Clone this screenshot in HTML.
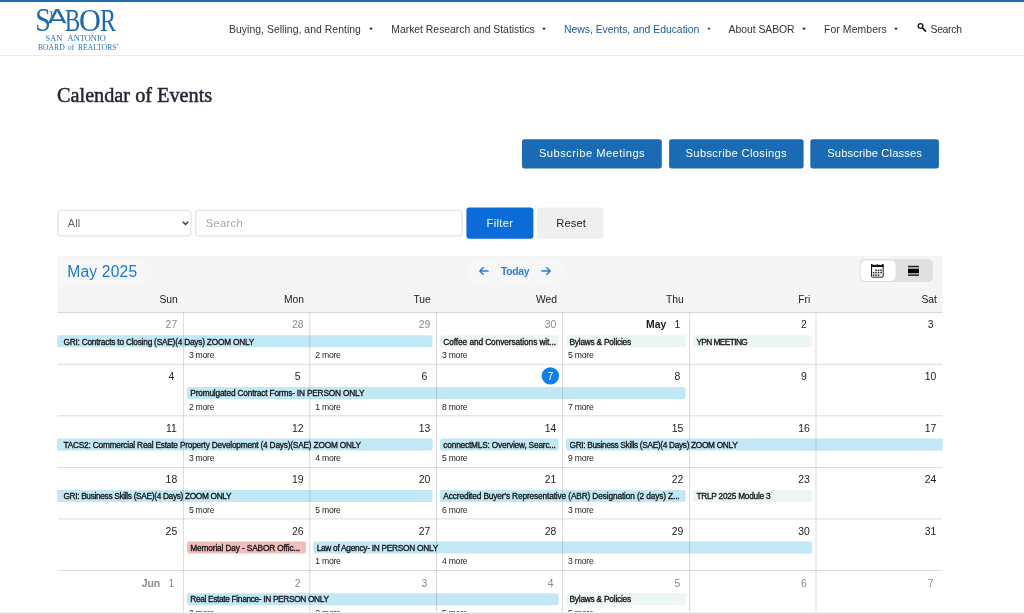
<!DOCTYPE html>
<html lang="en"><head><meta charset="utf-8"><title>Calendar of Events</title>
<style>
*{box-sizing:border-box;margin:0;padding:0}
html,body{width:1024px;height:614px;overflow:hidden;background:#fff}
body{font-family:"Liberation Sans",sans-serif;color:#222;position:relative}
.abs{position:absolute}
#topbar{position:absolute;left:0;top:0;width:1024px;height:2px;background:#1f6ab0}
#hdrline{position:absolute;left:0;top:55px;width:1024px;height:1px;background:#ececec}
.nav{position:absolute;top:22.6px;height:13px;line-height:13px;font-size:10.4px;color:#333;white-space:nowrap}
.nav.act{color:#1c5a97}
.dot{position:absolute;top:27.1px;width:3.2px;height:3.2px;border-radius:50%;background:#222}
.dot.act{background:#1c5a97}
#title{position:absolute;left:57px;top:83px;font-family:"Liberation Serif",serif;font-weight:normal;-webkit-text-stroke:0.5px #1e2430;font-size:20.5px;line-height:24px;color:#1e2430;white-space:nowrap;transform:scaleX(0.988);transform-origin:0 0}
.sub{position:absolute;top:139.3px;height:29px;color:#fff;font-size:11.2px;letter-spacing:0.42px;line-height:29px;text-align:center;border-radius:2.5px;white-space:nowrap}
#sel{position:absolute;left:57.4px;top:209.6px;width:134px;height:27px;border:1px solid transparent;font-size:10.9px;letter-spacing:0.2px;line-height:25px;color:#666;padding-left:9.3px}
#inp{position:absolute;left:195.3px;top:209.6px;width:267.4px;height:27px;border:1px solid transparent;font-size:11.2px;letter-spacing:0.3px;line-height:25px;color:#a8a8a8;padding-left:9.4px}
#filter{position:absolute;left:466.3px;top:207.5px;width:67.2px;height:31.2px;border-radius:3px;color:#fff;font-size:11.2px;letter-spacing:0.3px;line-height:31px;text-align:center}
#reset{padding-left:1.5px;position:absolute;left:537px;top:207.5px;width:66.8px;height:31.2px;border-radius:3px;color:#222;font-size:11.2px;letter-spacing:0.1px;line-height:31px;text-align:center}
#calhdr{display:none}
#month{position:absolute;left:67.2px;top:261.6px;font-size:15.6px;letter-spacing:0.2px;line-height:20px;color:#1a78d6;white-space:nowrap}
.dh{position:absolute;top:292.5px;font-size:10.3px;line-height:13px;color:#222;text-align:right;white-space:nowrap}
.hl{position:absolute;left:57.6px;width:885px;height:1px;background:#dcdcdc}
.vl{position:absolute;top:312.6px;width:1px;height:302px;background:#dcdcdc}
.dn{position:absolute;font-size:10.4px;line-height:13px;color:#222;white-space:nowrap}
.dn.o{color:#8a8a8a}
.dn b{font-weight:bold}
.dn .sp{display:inline-block;width:9px}
.today{position:absolute;width:18px;height:13px;color:#fff;font-size:10.4px;line-height:13px;text-align:center}
.ev{position:absolute;height:12.4px;font-size:8.3px;letter-spacing:-0.19px;line-height:12.4px;color:#111;white-space:nowrap;overflow:hidden;-webkit-text-stroke:0.3px #111}
.more{position:absolute;font-size:8.6px;letter-spacing:-0.22px;line-height:10px;color:#222;white-space:nowrap}
#today{position:absolute;left:501px;top:264.5px;font-size:10.3px;line-height:13px;color:#2b7dd8;font-weight:bold;letter-spacing:-0.3px;white-space:nowrap}
#tog{position:absolute;left:859.6px;top:259.1px;width:73.4px;height:22.9px;border-radius:5px;background:#e0e0e0}
#togsel{position:absolute;left:1px;top:1.2px;width:35px;height:20.5px;border-radius:4.5px;background:#fff}
#botline{position:absolute;left:0;top:612px;width:1024px;height:2px;background:linear-gradient(#f8f8f8 0%,#f8f8f8 50%,#d3d3d3 50%,#d3d3d3 100%)}
#wrap{position:absolute;left:0;top:0;width:1024px;height:614px;will-change:transform;overflow:hidden}
</style></head><body><div id="wrap">
<div id="topbar"></div>
<div id="hdrline"></div>

<!-- logo -->
<svg class="abs" style="left:0;top:0" width="130" height="56" viewBox="0 0 130 56">
 <defs><clipPath id="ac"><rect x="48.2" y="0" width="20.6" height="23.2"/></clipPath></defs>
 <g fill="#1b69ae" font-family="Liberation Serif, serif" font-size="32">
  <text transform="translate(35.32,30.78) scale(0.878,1.033)">S</text>
  <g clip-path="url(#ac)"><text font-family="Liberation Sans, sans-serif" transform="translate(46.6,26.4) scale(1.0,0.73)">A</text></g>
  <rect x="50.8" y="11" width="1.3" height="8.4" fill="#3f84c0"/><rect x="49.6" y="11" width="1.4" height="0.8" fill="#5a96c8"/>
  <text transform="translate(64.63,30.6) scale(0.726,0.964)">B</text>
  <text transform="translate(79.06,30.7) scale(0.947,0.972)">O</text>
  <text transform="translate(99.9,30.6) scale(0.756,0.969)">R</text>
 </g>
 <g fill="#2a73b3" font-family="Liberation Serif, serif">
  <text x="45.6" y="40.7" font-size="7.9" textLength="16.7" lengthAdjust="spacingAndGlyphs">SAN</text>
  <text x="67.6" y="40.7" font-size="7.9" textLength="38.2" lengthAdjust="spacingAndGlyphs">ANTONIO</text>
  <text x="38" y="49.5" font-size="7.5" textLength="26.7" lengthAdjust="spacingAndGlyphs">BOARD</text>
  <text x="68.1" y="49.5" font-size="7.5" textLength="6" lengthAdjust="spacingAndGlyphs">of</text>
  <text x="77.9" y="49.5" font-size="7.5" textLength="38.6" lengthAdjust="spacingAndGlyphs">REALTORS</text>
  <text x="116.6" y="46.3" font-size="3.2">®</text>
 </g>
</svg>

<div class="nav" id="n1" style="left:229px;letter-spacing:0.05px">Buying, Selling, and Renting</div><svg class="abs" style="left:367.9px;top:26px" width="6" height="6" viewBox="0 0 6 6"><path d="M1.2 1.8 H4.8 L3 4.3 Z" fill="#222"/></svg>
<div class="nav" id="n2" style="left:391.3px;letter-spacing:-0.01px">Market Research and Statistics</div><svg class="abs" style="left:541.3px;top:26px" width="6" height="6" viewBox="0 0 6 6"><path d="M1.2 1.8 H4.8 L3 4.3 Z" fill="#222"/></svg>
<div class="nav act" id="n3" style="left:564px;letter-spacing:-0.015px">News, Events, and Education</div><svg class="abs" style="left:705.9px;top:26px" width="6" height="6" viewBox="0 0 6 6"><path d="M1.2 1.8 H4.8 L3 4.3 Z" fill="#1c5a97"/></svg>
<div class="nav" id="n4" style="left:728.6px;letter-spacing:-0.04px">About SABOR</div><svg class="abs" style="left:801.1px;top:26px" width="6" height="6" viewBox="0 0 6 6"><path d="M1.2 1.8 H4.8 L3 4.3 Z" fill="#222"/></svg>
<div class="nav" id="n5" style="left:824px;letter-spacing:0.1px">For Members</div><svg class="abs" style="left:893.3px;top:26px" width="6" height="6" viewBox="0 0 6 6"><path d="M1.2 1.8 H4.8 L3 4.3 Z" fill="#222"/></svg>
<svg class="abs" style="left:916px;top:21px" width="12" height="12" viewBox="0 0 12 12"><circle cx="4.55" cy="5" r="2.35" fill="none" stroke="#1a1a1a" stroke-width="1.4"/><path d="M6.4 6.9 L9.5 10.1" stroke="#1a1a1a" stroke-width="1.7" stroke-linecap="round"/></svg>
<div class="nav" id="n6" style="left:930.5px;letter-spacing:-0.3px">Search</div>

<svg class="abs" style="left:0;top:0" width="1024" height="320" viewBox="0 0 1024 320">
 <rect x="522" y="139.2" width="139.8" height="29.3" rx="2.5" fill="#1a6ab4"/>
 <rect x="669.1" y="139.2" width="134.5" height="29.3" rx="2.5" fill="#1a6ab4"/>
 <rect x="810.3" y="139.2" width="128.6" height="29.3" rx="2.5" fill="#1a6ab4"/>
 <rect x="57.9" y="210.3" width="133" height="25.7" rx="2.8" fill="#fff" stroke="#d9dce2" stroke-width="1"/>
 <rect x="195.8" y="210.3" width="266.2" height="25.7" rx="2.8" fill="#fff" stroke="#d9dce2" stroke-width="1"/>
 <rect x="466.4" y="207.4" width="67" height="31.3" rx="3" fill="#0b6cd8"/>
 <rect x="537.1" y="207.4" width="66.6" height="31.3" rx="3" fill="#efefef"/>
 <rect x="57.2" y="255.9" width="885.4" height="56.6" fill="#f5f5f5"/>
</svg>
<div id="title">Calendar of Events</div>

<div class="sub" id="s1" style="left:522px;width:140px;letter-spacing:0.44px">Subscribe Meetings</div>
<div class="sub" id="s2" style="left:669px;width:134.5px;letter-spacing:0.31px">Subscribe Closings</div>
<div class="sub" id="s3" style="left:810.3px;width:128.7px;letter-spacing:0.13px">Subscribe Classes</div>

<div id="sel">All<svg class="abs" style="left:124px;top:10.5px" width="7" height="5" viewBox="0 0 7 5"><path d="M0.8 0.8 L3.5 3.6 L6.2 0.8" fill="none" stroke="#333" stroke-width="1.4"/></svg></div>
<div id="inp">Search</div>
<div id="filter">Filter</div>
<div id="reset">Reset</div>

<div id="calhdr"></div>
<svg class="abs" style="left:0;top:0" width="1024" height="320" viewBox="0 0 1024 320">
 <rect x="57.8" y="258.8" width="87.6" height="25.4" rx="3" fill="#f7f7f7"/>
 <rect x="467.6" y="258.6" width="32" height="24.6" rx="12" fill="#f7f7f7"/><rect x="499.8" y="258.6" width="30.5" height="24.6" rx="3" fill="#f7f7f7"/><rect x="530.5" y="258.6" width="32" height="24.6" rx="12" fill="#f7f7f7"/>
</svg>
<div id="month">May 2025</div>
<svg class="abs" style="left:478px;top:265px" width="12" height="12" viewBox="0 0 12 12"><path d="M10.6 6 H2.2 M5.6 2.3 L1.9 6 L5.6 9.7" fill="none" stroke="#2b7dd8" stroke-width="1.5"/></svg>
<div id="today">Today</div>
<svg class="abs" style="left:540.4px;top:265px" width="12" height="12" viewBox="0 0 12 12"><path d="M1.4 6 H9.8 M6.4 2.3 L10.1 6 L6.4 9.7" fill="none" stroke="#2b7dd8" stroke-width="1.5"/></svg>
<svg class="abs" style="left:0;top:0" width="1024" height="320" viewBox="0 0 1024 320">
 <rect x="859.6" y="259.1" width="73.4" height="22.9" rx="5" fill="#e0e0e0"/>
 <rect x="860.7" y="260.4" width="34.8" height="20.5" rx="4.5" fill="#fff"/>
 <rect x="871.5" y="265.4" width="11.7" height="11.8" rx="0.8" fill="#fff" stroke="#222" stroke-width="1"/>
 <path d="M871 267.1 V264.1 H872 L873.2 264.9 H875 Q877.35 263.9 879.7 264.9 H881.5 L882.7 264.1 H883.7 V267.1 Z" fill="#111"/>
 <g fill="#1a1a1a">
  <rect x="875.3" y="269.6" width="1.5" height="1.5"/><rect x="877.8" y="269.6" width="1.5" height="1.5"/><rect x="880.3" y="269.6" width="1.5" height="1.5"/>
  <rect x="872.8" y="271.9" width="1.5" height="1.5"/><rect x="875.3" y="271.9" width="1.5" height="1.5"/><rect x="877.8" y="271.9" width="1.5" height="1.5"/><rect x="880.3" y="271.9" width="1.5" height="1.5"/>
  <rect x="872.8" y="274.4" width="1.5" height="1.5"/><rect x="875.3" y="274.4" width="1.5" height="1.5"/><rect x="877.8" y="274.4" width="1.5" height="1.5"/>
 </g>
 <rect x="908" y="265.8" width="11" height="1.5" fill="#222"/><rect x="908" y="268.7" width="11" height="4.6" fill="#000"/><rect x="908" y="274.4" width="11" height="1.5" fill="#222"/>
</svg>


<div class="dh" style="right:846.3px">Sun</div>
<div class="dh" style="right:719.95px">Mon</div>
<div class="dh" style="right:593.25px">Tue</div>
<div class="dh" style="right:467.1px">Wed</div>
<div class="dh" style="right:340.2px">Thu</div>
<div class="dh" style="right:213.7px">Fri</div>
<div class="dh" style="right:87.1px">Sat</div>

<svg class="abs" style="left:0;top:0" width="1024" height="614" viewBox="0 0 1024 614">
<path d="M57.20 335.20H430.55A2 2 0 0 1 432.55 337.20V345.20A2 2 0 0 1 430.55 347.20H57.20V335.20Z" fill="#c2e8f5"/>
<path d="M442.05 335.20H556.70A2 2 0 0 1 558.70 337.20V345.20A2 2 0 0 1 556.70 347.20H442.05A2 2 0 0 1 440.05 345.20V337.20A2 2 0 0 1 442.05 335.20Z" fill="#ecf7f1"/>
<path d="M568.20 335.20H683.60A2 2 0 0 1 685.60 337.20V345.20A2 2 0 0 1 683.60 347.20H568.20A2 2 0 0 1 566.20 345.20V337.20A2 2 0 0 1 568.20 335.20Z" fill="#ecf7f1"/>
<path d="M695.10 335.20H810.10A2 2 0 0 1 812.10 337.20V345.20A2 2 0 0 1 810.10 347.20H695.10A2 2 0 0 1 693.10 345.20V337.20A2 2 0 0 1 695.10 335.20Z" fill="#ecf7f1"/>
<path d="M189.00 387.00H683.60A2 2 0 0 1 685.60 389.00V397.00A2 2 0 0 1 683.60 399.00H189.00A2 2 0 0 1 187.00 397.00V389.00A2 2 0 0 1 189.00 387.00Z" fill="#c2e8f5"/>
<path d="M57.20 438.50H430.55A2 2 0 0 1 432.55 440.50V448.50A2 2 0 0 1 430.55 450.50H57.20V438.50Z" fill="#c2e8f5"/>
<path d="M442.05 438.50H556.70A2 2 0 0 1 558.70 440.50V448.50A2 2 0 0 1 556.70 450.50H442.05A2 2 0 0 1 440.05 448.50V440.50A2 2 0 0 1 442.05 438.50Z" fill="#c2e8f5"/>
<path d="M568.20 438.50H942.60V450.50H568.20A2 2 0 0 1 566.20 448.50V440.50A2 2 0 0 1 568.20 438.50Z" fill="#c2e8f5"/>
<path d="M57.20 490.10H430.55A2 2 0 0 1 432.55 492.10V500.10A2 2 0 0 1 430.55 502.10H57.20V490.10Z" fill="#c2e8f5"/>
<path d="M442.05 490.10H683.60A2 2 0 0 1 685.60 492.10V500.10A2 2 0 0 1 683.60 502.10H442.05A2 2 0 0 1 440.05 500.10V492.10A2 2 0 0 1 442.05 490.10Z" fill="#c2e8f5"/>
<path d="M695.10 490.10H810.10A2 2 0 0 1 812.10 492.10V500.10A2 2 0 0 1 810.10 502.10H695.10A2 2 0 0 1 693.10 500.10V492.10A2 2 0 0 1 695.10 490.10Z" fill="#ecf7f1"/>
<path d="M189.00 541.60H303.85A2 2 0 0 1 305.85 543.60V551.60A2 2 0 0 1 303.85 553.60H189.00A2 2 0 0 1 187.00 551.60V543.60A2 2 0 0 1 189.00 541.60Z" fill="#f0bcbc"/>
<path d="M315.35 541.60H810.10A2 2 0 0 1 812.10 543.60V551.60A2 2 0 0 1 810.10 553.60H315.35A2 2 0 0 1 313.35 551.60V543.60A2 2 0 0 1 315.35 541.60Z" fill="#c2e8f5"/>
<path d="M189.00 593.15H556.70A2 2 0 0 1 558.70 595.15V603.15A2 2 0 0 1 556.70 605.15H189.00A2 2 0 0 1 187.00 603.15V595.15A2 2 0 0 1 189.00 593.15Z" fill="#c2e8f5"/>
<path d="M568.20 593.15H683.60A2 2 0 0 1 685.60 595.15V603.15A2 2 0 0 1 683.60 605.15H568.20A2 2 0 0 1 566.20 603.15V595.15A2 2 0 0 1 568.20 593.15Z" fill="#ecf7f1"/>
<rect x="57.20" y="312.00" width="885.40" height="1" fill="rgba(0,0,0,0.14)"/>
<rect x="57.20" y="363.80" width="885.40" height="1" fill="rgba(0,0,0,0.14)"/>
<rect x="57.20" y="415.30" width="885.40" height="1" fill="rgba(0,0,0,0.14)"/>
<rect x="57.20" y="466.90" width="885.40" height="1" fill="rgba(0,0,0,0.14)"/>
<rect x="57.20" y="518.40" width="885.40" height="1" fill="rgba(0,0,0,0.14)"/>
<rect x="57.20" y="569.95" width="885.40" height="1" fill="rgba(0,0,0,0.14)"/>
<rect x="182.90" y="312.50" width="1" height="301.50" fill="rgba(0,0,0,0.14)"/>
<rect x="309.25" y="312.50" width="1" height="301.50" fill="rgba(0,0,0,0.14)"/>
<rect x="435.95" y="312.50" width="1" height="301.50" fill="rgba(0,0,0,0.14)"/>
<rect x="562.10" y="312.50" width="1" height="301.50" fill="rgba(0,0,0,0.14)"/>
<rect x="689.00" y="312.50" width="1" height="301.50" fill="rgba(0,0,0,0.14)"/>
<rect x="815.50" y="312.50" width="1" height="301.50" fill="rgba(0,0,0,0.14)"/>
<circle cx="550.35" cy="375.90" r="8.7" fill="#0f7ff0"/>
</svg>
<div class="ev" style="left:63.40px;top:336px;width:368.15px;letter-spacing:-0.217px">GRI: Contracts to Closing (SAE)(4 Days) ZOOM ONLY</div>
<div class="ev" style="left:443.35px;top:336px;width:114.35px;letter-spacing:-0.08px">Coffee and Conversations wit...</div>
<div class="ev" style="left:569.50px;top:336px;width:115.10px;letter-spacing:-0.21px">Bylaws &amp; Policies</div>
<div class="ev" style="left:696.40px;top:336px;width:114.70px;letter-spacing:-0.58px">YPN MEETING</div>
<div class="ev" style="left:190.30px;top:387px;width:494.30px;letter-spacing:-0.18px">Promulgated Contract Forms- IN PERSON ONLY</div>
<div class="ev" style="left:63.40px;top:439px;width:368.15px;letter-spacing:-0.2px">TACS2: Commercial Real Estate Property Development (4 Days)(SAE) ZOOM ONLY</div>
<div class="ev" style="left:443.35px;top:439px;width:114.35px;letter-spacing:-0.19px">connectMLS: Overview, Searc...</div>
<div class="ev" style="left:569.50px;top:439px;width:372.10px;letter-spacing:-0.32px">GRI: Business Skills (SAE)(4 Days) ZOOM ONLY</div>
<div class="ev" style="left:63.40px;top:490px;width:368.15px;letter-spacing:-0.32px">GRI: Business Skills (SAE)(4 Days) ZOOM ONLY</div>
<div class="ev" style="left:443.35px;top:490px;width:241.25px;letter-spacing:-0.13px">Accredited Buyer's Representative (ABR) Designation (2 days) Z...</div>
<div class="ev" style="left:696.40px;top:490px;width:114.70px;letter-spacing:-0.237px">TRLP 2025 Module 3</div>
<div class="ev" style="left:190.30px;top:542px;width:114.55px;letter-spacing:-0.14px">Memorial Day - SABOR Offic...</div>
<div class="ev" style="left:316.65px;top:542px;width:494.45px;letter-spacing:-0.265px">Law of Agency- IN PERSON ONLY</div>
<div class="ev" style="left:190.30px;top:593px;width:367.40px;letter-spacing:-0.325px">Real Estate Finance- IN PERSON ONLY</div>
<div class="ev" style="left:569.50px;top:593px;width:115.10px;letter-spacing:-0.21px">Bylaws &amp; Policies</div>
<div class="dn o" style="left:156.40px;width:30px;text-align:center;top:318px">27</div>
<div class="dn o" style="left:282.75px;width:30px;text-align:center;top:318px">28</div>
<div class="dn o" style="left:409.45px;width:30px;text-align:center;top:318px">29</div>
<div class="dn o" style="left:535.60px;width:30px;text-align:center;top:318px">30</div>
<div class="dn mo" style="right:357.80px;top:318px"><b>May</b></div>
<div class="dn" style="left:662.50px;width:30px;text-align:center;top:318px">1</div>
<div class="dn" style="left:789.00px;width:30px;text-align:center;top:318px">2</div>
<div class="dn" style="left:915.60px;width:30px;text-align:center;top:318px">3</div>
<div class="dn" style="left:156.40px;width:30px;text-align:center;top:370px">4</div>
<div class="dn" style="left:282.75px;width:30px;text-align:center;top:370px">5</div>
<div class="dn" style="left:409.45px;width:30px;text-align:center;top:370px">6</div>
<div class="today" style="left:541.35px;top:370.30px">7</div>
<div class="dn" style="left:662.50px;width:30px;text-align:center;top:370px">8</div>
<div class="dn" style="left:789.00px;width:30px;text-align:center;top:370px">9</div>
<div class="dn" style="left:915.60px;width:30px;text-align:center;top:370px">10</div>
<div class="dn" style="left:156.40px;width:30px;text-align:center;top:422px">11</div>
<div class="dn" style="left:282.75px;width:30px;text-align:center;top:422px">12</div>
<div class="dn" style="left:409.45px;width:30px;text-align:center;top:422px">13</div>
<div class="dn" style="left:535.60px;width:30px;text-align:center;top:422px">14</div>
<div class="dn" style="left:662.50px;width:30px;text-align:center;top:422px">15</div>
<div class="dn" style="left:789.00px;width:30px;text-align:center;top:422px">16</div>
<div class="dn" style="left:915.60px;width:30px;text-align:center;top:422px">17</div>
<div class="dn" style="left:156.40px;width:30px;text-align:center;top:473px">18</div>
<div class="dn" style="left:282.75px;width:30px;text-align:center;top:473px">19</div>
<div class="dn" style="left:409.45px;width:30px;text-align:center;top:473px">20</div>
<div class="dn" style="left:535.60px;width:30px;text-align:center;top:473px">21</div>
<div class="dn" style="left:662.50px;width:30px;text-align:center;top:473px">22</div>
<div class="dn" style="left:789.00px;width:30px;text-align:center;top:473px">23</div>
<div class="dn" style="left:915.60px;width:30px;text-align:center;top:473px">24</div>
<div class="dn" style="left:156.40px;width:30px;text-align:center;top:525px">25</div>
<div class="dn" style="left:282.75px;width:30px;text-align:center;top:525px">26</div>
<div class="dn" style="left:409.45px;width:30px;text-align:center;top:525px">27</div>
<div class="dn" style="left:535.60px;width:30px;text-align:center;top:525px">28</div>
<div class="dn" style="left:662.50px;width:30px;text-align:center;top:525px">29</div>
<div class="dn" style="left:789.00px;width:30px;text-align:center;top:525px">30</div>
<div class="dn" style="left:915.60px;width:30px;text-align:center;top:525px">31</div>
<div class="dn o mo" style="right:863.90px;top:577px"><b>Jun</b></div>
<div class="dn o" style="left:156.40px;width:30px;text-align:center;top:577px">1</div>
<div class="dn o" style="left:282.75px;width:30px;text-align:center;top:577px">2</div>
<div class="dn o" style="left:409.45px;width:30px;text-align:center;top:577px">3</div>
<div class="dn o" style="left:535.60px;width:30px;text-align:center;top:577px">4</div>
<div class="dn o" style="left:662.50px;width:30px;text-align:center;top:577px">5</div>
<div class="dn o" style="left:789.00px;width:30px;text-align:center;top:577px">6</div>
<div class="dn o" style="left:915.60px;width:30px;text-align:center;top:577px">7</div>
<div class="more" style="left:188.90px;top:349.70px">3 more</div>
<div class="more" style="left:315.25px;top:349.70px">2 more</div>
<div class="more" style="left:441.95px;top:349.70px">3 more</div>
<div class="more" style="left:568.10px;top:349.70px">5 more</div>
<div class="more" style="left:188.90px;top:401.50px">2 more</div>
<div class="more" style="left:315.25px;top:401.50px">1 more</div>
<div class="more" style="left:441.95px;top:401.50px">8 more</div>
<div class="more" style="left:568.10px;top:401.50px">7 more</div>
<div class="more" style="left:188.90px;top:453.00px">3 more</div>
<div class="more" style="left:315.25px;top:453.00px">4 more</div>
<div class="more" style="left:441.95px;top:453.00px">5 more</div>
<div class="more" style="left:568.10px;top:453.00px">9 more</div>
<div class="more" style="left:188.90px;top:504.60px">5 more</div>
<div class="more" style="left:315.25px;top:504.60px">5 more</div>
<div class="more" style="left:441.95px;top:504.60px">6 more</div>
<div class="more" style="left:568.10px;top:504.60px">3 more</div>
<div class="more" style="left:315.25px;top:556.10px">1 more</div>
<div class="more" style="left:441.95px;top:556.10px">4 more</div>
<div class="more" style="left:568.10px;top:556.10px">3 more</div>
<div class="more" style="left:188.90px;top:607.65px">2 more</div>
<div class="more" style="left:315.25px;top:607.65px">2 more</div>
<div class="more" style="left:441.95px;top:607.65px">5 more</div>
<div class="more" style="left:568.10px;top:607.65px">5 more</div>
<div id="botline"></div>
</div></body></html>
